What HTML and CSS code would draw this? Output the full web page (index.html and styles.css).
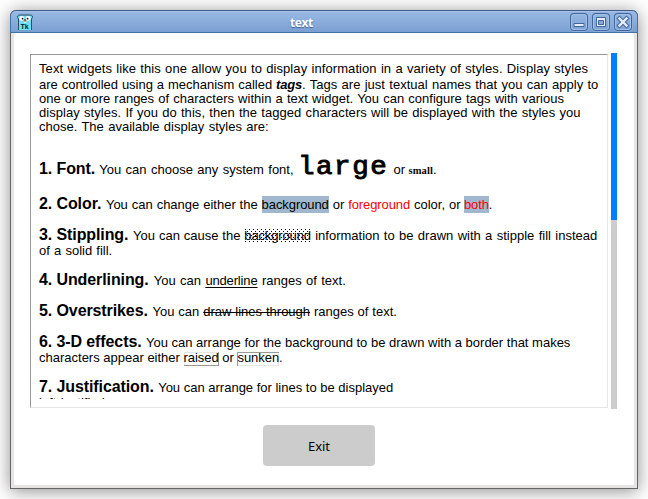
FILE: index.html
```html
<!DOCTYPE html>
<html lang="en">
<head>
<meta charset="utf-8">
<title>text</title>
<link rel="stylesheet" href="styles.css">
</head>
<body>
<div class="window">
  <header class="titlebar">
    <svg class="app-icon" width="16" height="16" viewBox="0 0 16 16">
      <path d="M1.500 16V5Q0 3.500 .7 2Q1.500 .8 3 1.500H13Q14.500 .8 15.300 2Q16 3.500 14.500 5V16Z" fill="#6fdff5"/>
      <path d="M1.500 16V5Q0 3.500 .7 2Q1.500 .8 3 1H13Q14.500 .8 15.300 2Q16 3.500 14.500 5V16" fill="none" stroke="#27505f"/>
      <circle cx="4.800" cy="4.400" r="2.400" fill="#fff"/>
      <circle cx="11.200" cy="4.400" r="2.400" fill="#fff"/>
      <circle cx="5.600" cy="4.700" r=".9" fill="#111"/>
      <circle cx="10.600" cy="4.700" r=".9" fill="#111"/>
      <ellipse cx="8" cy="7" rx="2" ry="1.100" fill="#d9a58a"/>
      <path d="M7 5.600h2v1h-2z" fill="#222"/>
      <path d="M7.300 7.900h1.400v1.200h-1.400z" fill="#fff"/>
      <text x="3.600" y="15" class="icon-label">Tk</text>
    </svg>
    <span class="title">text</span>
    <div class="controls">
      <span class="control"><svg width="18" height="18"><path d="M4 10.500h10v3h-10z" fill="#e6eefa" stroke="#3f679e"/></svg></span>
      <span class="control"><svg width="18" height="18"><path d="M4.500 4.500h9v9h-9z" fill="#e6eefa" stroke="#3f679e"/><path d="M6.500 7.500h5v4h-5z" fill="#86a8d8" stroke="#3f679e"/></svg></span>
      <span class="control"><svg width="18" height="18"><path d="M5.500 5.500l7 7M12.500 5.500l-7 7" stroke="#3f679e" stroke-width="4.400" stroke-linecap="square"/><path d="M5.500 5.500l7 7M12.500 5.500l-7 7" stroke="#e6eefa" stroke-width="2.400" stroke-linecap="square"/></svg></span>
    </div>
  </header>
  <main class="content">
    <div class="editor">
      <div class="textbox">
        <div class="text">
          <p class="line wide">Text widgets like this one allow you to display information in a variety of styles. Display styles</p>
          <p class="line second">are controlled using a mechanism called <b class="tags">tags</b><span class="looser">. Tags are just textual names that you can apply to</span></p>
          <p class="line loose">one or more ranges of characters within a text widget. You can configure tags with various</p>
          <p class="line fourth">display styles. If you do this, then the tagged characters will be displayed with the styles you</p>
          <p class="line looser">chose. The available display styles are:</p>
          <p class="line item-font"><b class="head">1. Font.</b> You can choose any system font, <b class="large">large</b> or <b class="small">small</b>.</p>
          <p class="line item-color"><b class="head">2. Color.</b> You can change either the <span class="bg">background</span> or <span class="fg">foreground</span> color, or <span class="bg fg">both</span>.</p>
          <p class="line item"><b class="head">3. Stippling.</b> You can cause the <span class="stipple">background</span><span class="looser"> information to be drawn with a stipple fill instead</span></p>
          <p class="line next loose">of a solid fill.</p>
          <p class="line item short looser"><b class="head">4. Underlining.</b> You can <span class="underline">underline</span> ranges of text.</p>
          <p class="line item"><b class="head">5. Overstrikes.</b> You can <span class="strike">draw lines through</span> ranges of text.</p>
          <p class="line item exact"><b class="head">6. 3-D effects.</b> You can arrange for the background to be drawn with a border that makes</p>
          <p class="line next exact">characters appear either <span class="relief raised">raised</span> or <span class="relief sunken">sunken</span>.</p>
          <p class="line item short exact"><b class="head">7. Justification.</b> You can arrange for lines to be displayed</p>
          <p class="line next">left-justified,</p>
        </div>
      </div>
      <div class="scrollbar"><div class="thumb"></div></div>
    </div>
    <button class="exit" type="button">Exit</button>
  </main>
</div>
</body>
</html>
```

FILE: styles.css
```css
* { box-sizing: border-box; }
body {
  margin: 0;
  padding: 10px;
  height: 499px;
  overflow: hidden;
  background: #fff;
}
.window {
  display: flex;
  flex-direction: column;
  width: 628px;
  height: 479px;
  border-radius: 6px 6px 0 0;
  border: 1px solid #666;
  border-top: 0;
  background: #e6e5e4;
  box-shadow: 0 2px 18px rgba(0, 0, 0, .45);
}
.titlebar {
  display: flex;
  align-items: center;
  height: 23px;
  margin: 0 -1px;
  padding: 0 5px 0 7px;
  border: 1px solid #4670a8;
  border-top-color: #3e5d86;
  border-radius: 6px 6px 0 0;
  background: linear-gradient(#9bbae5, #799fd1);
  box-shadow: inset 0 1px #a6c2ea;
}
.app-icon { margin: 0 0 0 -1px; }
.icon-label { font: bold 7px "Liberation Sans", sans-serif; fill: #0b2730; }
.title {
  flex: 1;
  padding-top: 2px;
  text-align: center;
  font: bold 12px/17px "Open Sans", sans-serif;
  letter-spacing: -.4px;
  color: #fff;
  text-shadow: 0 1px 1px #40608f;
}
.controls { display: flex; gap: 4px; margin-top: 1px; }
.control {
  width: 18px;
  height: 18px;
  border-radius: 4px;
  box-shadow: inset 0 0 0 1px #3f679e, inset 0 0 0 2px #a3bfe6, 0 0 0 1px #8fb0de;
}
.control svg { display: block; }
.content {
  flex: 1;
  display: flex;
  flex-direction: column;
  margin: 0 3px 3px;
  padding: 20px 17px 19px 16px;
  background: #fff;
}
.editor { display: flex; gap: 3px; height: 356px; }
.textbox {
  width: 578px;
  height: 354px;
  margin-top: 1px;
  border: 1px solid #999;
  border-right-color: #e5e5e5;
  border-bottom-color: #e5e5e5;
}
.text {
  height: 344px;
  overflow: hidden;
  padding: 7px 0 0 8px;
  font: 13px/14px "Liberation Sans", Arial, sans-serif;
  word-spacing: .3px;
  color: #000;
}
.line { margin: 0; height: 14px; white-space: nowrap; }
.line b { line-height: 0; }
.wide { letter-spacing: .087px; word-spacing: .5px; }
.second { margin-top: 2px; word-spacing: .25px; }
.loose { word-spacing: .55px; }
.looser { word-spacing: .75px; }
.fourth { letter-spacing: .055px; word-spacing: .5px; }
.item { margin-top: 17px; }
.item-font { margin-top: 29px; word-spacing: .8px; }
.item-color { margin-top: 21px; word-spacing: .3px; }
.short { margin-top: 16px; }
.next { margin-top: 1px; }
.exact { word-spacing: 0; }
.tags { font-style: italic; letter-spacing: -.2px; }
.head { margin-right: 1px; font-size: 16px; word-spacing: 0; letter-spacing: -.1px; }
.item-font .head { margin-right: 0; }
.large {
  display: inline-block;
  width: 91px;
  font: 25px/0 "Liberation Mono", "Courier New", monospace;
  letter-spacing: 1.400px;
  -webkit-text-stroke: .9px #000;
  transform: scaleX(1.1);
  transform-origin: 0 50%;
}
.small { margin-left: -1px; font: bold 10.500px/0 "Liberation Serif", "Times New Roman", serif; letter-spacing: .15px; }
.bg { padding: 1px 0; background: #a0b7ce; letter-spacing: -.08px; }
.fg { color: #f00; letter-spacing: -.1px; }
.item-color .bg.fg { margin-left: -.5px; }
.stipple {
  letter-spacing: -.15px;
  background:
    conic-gradient(from 90deg at 3px 3px, #000 25%, transparent 0) 0 0 / 4px 4px,
    conic-gradient(from 90deg at 3px 3px, #000 25%, transparent 0) 2px 2px / 4px 4px;
}
.underline { text-decoration: underline 1px; text-underline-offset: 2px; text-decoration-skip-ink: none; letter-spacing: -.15px; }
.strike { text-decoration: line-through 1px; }
.relief { display: inline-block; height: 14px; line-height: 11px; letter-spacing: -.05px; vertical-align: baseline; }
.raised { box-shadow: inset -1px -1px #999, inset 1px 1px #e5e5e5; }
.sunken { box-shadow: inset 1px 1px #999, inset -1px -1px #e5e5e5; }
.scrollbar { width: 6px; height: 356px; background: #ccc; }
.thumb { height: 167px; background: #0080ff; }
.exit {
  width: 112px;
  height: 41px;
  margin: 16px 0 0 233px;
  padding: 0;
  border: 0;
  border-radius: 4px;
  background: #ccc;
  font: 13px "Noto Sans", "Open Sans", sans-serif;
  letter-spacing: -.1px;
  color: #000;
}
```
